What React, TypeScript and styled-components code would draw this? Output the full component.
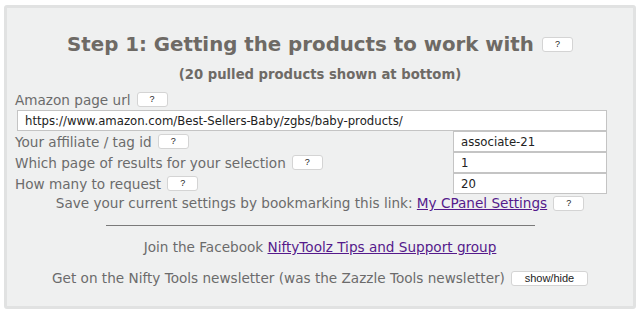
import styled, { createGlobalStyle } from "styled-components";

const GlobalStyle = createGlobalStyle`
  html, body {
    margin: 0;
    padding: 0;
    background: #ffffff;
  }
  body {
    font-family: "DejaVu Sans", Verdana, sans-serif;
  }
`;

const Page = styled.div`
  padding: 5px 4px 6px 4px;
`;

const Panel = styled.div`
  background: #eff0f0;
  border: 3px solid #e1e2e2;
  border-radius: 3px;
  height: 304px;
  box-sizing: border-box;
  color: #6b6b6b;
  font-size: 13.6px;
`;

const TitleRow = styled.div`
  display: flex;
  justify-content: center;
  align-items: center;
  gap: 8px;
  padding-top: 25px;
`;

const Title = styled.h1`
  margin: 0;
  font-size: 19.8px;
  font-weight: bold;
  color: #6e6a65;
`;

const Subtitle = styled.div`
  text-align: center;
  font-weight: bold;
  font-size: 13.2px;
  color: #6e6a65;
  margin-top: 11px;
`;

const HelpButton = styled.button<{ $wide?: boolean }>`
  width: ${({ $wide }) => ($wide ? "77px" : "31px")};
  height: 15px;
  padding: 0;
  margin: 0;
  background: #ffffff;
  border: 1px solid #d4d4d4;
  border-radius: 3px;
  font-family: "Liberation Sans", Arial, sans-serif;
  font-size: ${({ $wide }) => ($wide ? "11px" : "9px")};
  color: #222;
  line-height: 13px;
  vertical-align: middle;
`;

const Form = styled.div`
  margin: 7px 0 0 8px;
  width: 592px;
  display: grid;
  grid-template-columns: 1fr 154px;
`;

const Label = styled.div<{ $full?: boolean }>`
  grid-column: ${({ $full }) => ($full ? "1 / span 2" : "1")};
  display: flex;
  align-items: center;
  gap: 6px;
  height: 21px;
  white-space: nowrap;
`;

const Input = styled.input<{ $full?: boolean }>`
  grid-column: ${({ $full }) => ($full ? "1 / span 2" : "2")};
  box-sizing: border-box;
  height: 21px;
  margin: ${({ $full }) => ($full ? "0 0 0 2px" : "0")};
  border: 1px solid #c4c4c4;
  background: #ffffff;
  font-family: "DejaVu Sans", Verdana, sans-serif;
  font-size: 11.7px;
  color: #222;
  padding: 0 7px;
  outline: none;
`;

const CenterLine = styled.div<{ $top: number }>`
  display: flex;
  justify-content: center;
  align-items: center;
  gap: 6px;
  margin-top: ${({ $top }) => $top}px;
  white-space: nowrap;
`;

const Link = styled.a`
  color: #551a8b;
  text-decoration: underline;
`;

const Rule = styled.hr`
  width: 429px;
  margin: 14px auto 0 auto;
  border: none;
  border-top: 1px solid #7a7a7a;
  height: 0;
`;

export default function App() {
  return (
    <Page>
      <GlobalStyle />
      <Panel>
        <TitleRow>
          <Title>Step 1: Getting the products to work with</Title>
          <HelpButton>?</HelpButton>
        </TitleRow>
        <Subtitle>(20 pulled products shown at bottom)</Subtitle>

        <Form>
          <Label $full>
            Amazon page url <HelpButton>?</HelpButton>
          </Label>
          <Input
            $full
            defaultValue="https://www.amazon.com/Best-Sellers-Baby/zgbs/baby-products/"
          />
          <Label>
            Your affiliate / tag id <HelpButton>?</HelpButton>
          </Label>
          <Input defaultValue="associate-21" />
          <Label>
            Which page of results for your selection <HelpButton>?</HelpButton>
          </Label>
          <Input defaultValue="1" />
          <Label>
            How many to request <HelpButton>?</HelpButton>
          </Label>
          <Input defaultValue="20" />
        </Form>

        <CenterLine $top={1}>
          <span>
            Save your current settings by bookmarking this link:{" "}
            <Link href="#">My CPanel Settings</Link>
          </span>
          <HelpButton>?</HelpButton>
        </CenterLine>

        <Rule />

        <CenterLine $top={13}>
          <span>
            Join the Facebook{" "}
            <Link href="#">NiftyToolz Tips and Support group</Link>
          </span>
        </CenterLine>

        <CenterLine $top={15}>
          <span>
            Get on the Nifty Tools newsletter (was the Zazzle Tools newsletter)
          </span>
          <HelpButton $wide>show/hide</HelpButton>
        </CenterLine>
      </Panel>
    </Page>
  );
}
